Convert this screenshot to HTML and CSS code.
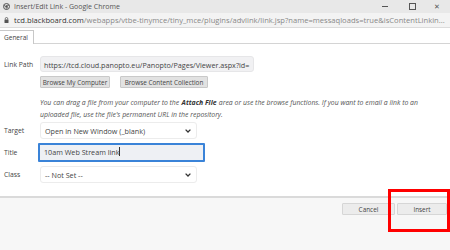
FILE: index.html
```html
<!DOCTYPE html>
<html lang="en">
<head>
    <meta charset="UTF-8">
    <title>Insert/Edit Link - Google Chrome</title>
    <link rel="stylesheet" href="styles.css">
</head>
<body>
    <div class="titlebar">
        <svg class="chrome-icon" width="7" height="7" viewBox="0 0 14 14">
            <circle cx="7" cy="7" r="6" fill="none" stroke="#555" stroke-width="2"/>
            <circle cx="7" cy="7" r="2.4" fill="#555"/>
            <path d="M7 4.6H12.6M4.9 8.2L2.1 3.4M9.1 8.2L6.3 13" stroke="#555" stroke-width="1.4"/>
        </svg>
        <span class="title-text">Insert/Edit Link - Google Chrome</span>
        <div class="win-controls">
            <span class="ctl-min"></span>
            <span class="ctl-max"></span>
            <span class="ctl-close">&#x2715;</span>
        </div>
    </div>

    <div class="addressbar">
        <svg class="lock" width="5" height="6" viewBox="0 0 10 12">
            <path d="M2.5 5V3.5a2.5 2.5 0 0 1 5 0V5" fill="none" stroke="#555" stroke-width="1.6"/>
            <rect x="1" y="5" width="8" height="7" rx="1" fill="#555"/>
        </svg>
        <span class="url"><span class="host">tcd.blackboard.com</span>/webapps/vtbe-tinymce/tiny_mce/plugins/advlink/link.jsp?name=messaqloads=true&amp;isContentLinkin...</span>
    </div>

    <div class="tabs">
        <div class="tab">General</div>
    </div>

    <div class="panel">
        <div class="row row-path">
            <label class="label">Link Path</label>
            <div class="input path-input">https://tcd.cloud.panopto.eu/Panopto/Pages/Viewer.aspx?id=</div>
        </div>
        <div class="row row-buttons">
            <button class="btn btn-browse">Browse My Computer</button>
            <button class="btn btn-collection">Browse Content Collection</button>
        </div>
        <p class="help">You can drag a file from your computer to the <b>Attach File</b> area or use the browse functions. If you want to email a link to an uploaded file, use the file's permanent URL in the repository.</p>
        <div class="row row-target">
            <label class="label">Target</label>
            <div class="select">
                <span>Open in New Window (_blank)</span>
                <svg class="chev" width="6" height="4" viewBox="0 0 6 4"><path d="M0.6 0.6L3 3L5.4 0.6" fill="none" stroke="#333" stroke-width="1.3"/></svg>
            </div>
        </div>
        <div class="row row-title">
            <label class="label">Title</label>
            <div class="input title-input">10am Web Stream link<span class="caret"></span></div>
        </div>
        <div class="row row-class">
            <label class="label">Class</label>
            <div class="select">
                <span>-- Not Set --</span>
                <svg class="chev" width="6" height="4" viewBox="0 0 6 4"><path d="M0.6 0.6L3 3L5.4 0.6" fill="none" stroke="#333" stroke-width="1.3"/></svg>
            </div>
        </div>
    </div>

    <div class="footer">
        <button class="btn btn-cancel">Cancel</button>
        <button class="btn btn-insert">Insert</button>
    </div>

    <div class="highlight"></div>
</body>
</html>
```

FILE: styles.css
```css
body {
    margin: 0;
    width: 450px;
    height: 250px;
    overflow: hidden;
    position: relative;
    font-family: 'Open Sans', 'Noto Sans', sans-serif;
    color: #444;
    background-color: #fff;
}
.titlebar {
    height: 13px;
    display: flex;
    align-items: center;
    padding-left: 3px;
    background-color: #e8e8e8;
    font-size: 7px;
    color: #555;
}
.chrome-icon {
    margin-right: 4px;
}
.win-controls {
    margin-left: auto;
    display: flex;
    align-items: center;
    height: 13px;
}
.ctl-min {
    width: 6px;
    height: 1px;
    background-color: #555;
    margin-right: 21px;
}
.ctl-max {
    width: 5px;
    height: 5px;
    border: 1px solid #555;
    margin-right: 18px;
}
.ctl-close {
    font-size: 7px;
    color: #555;
    margin-right: 10px;
}
.addressbar {
    height: 14px;
    display: flex;
    align-items: center;
    padding-left: 4px;
    background-color: #f3f3f3;
    border-bottom: 1px solid #dcdcdc;
    font-size: 7.6px;
    white-space: nowrap;
    overflow: hidden;
}
.lock {
    margin-right: 5px;
}
.url {
    color: #888;
}
.host {
    color: #333;
}
.tabs {
    height: 16px;
    padding-top: 1px;
    box-sizing: border-box;
    border-bottom: 1px solid #d4d4d4;
    display: flex;
    align-items: flex-end;
}
.tab {
    height: 14px;
    width: 34px;
    box-sizing: border-box;
    border: 1px solid #c8c8c8;
    border-bottom: none;
    border-left: none;
    background-color: #fff;
    font-size: 6.5px;
    color: #444;
    padding-left: 4px;
    line-height: 14px;
    margin-bottom: -1px;
}
.panel {
    padding-top: 12px;
    height: 152px;
    box-sizing: border-box;
}
.row {
    display: flex;
    align-items: center;
}
.label {
    width: 36px;
    padding-left: 4px;
    font-size: 6.8px;
    color: #444;
}
.input {
    box-sizing: border-box;
    font-size: 7.2px;
    color: #444;
    white-space: nowrap;
    overflow: hidden;
}
.path-input {
    width: 214px;
    height: 16px;
    line-height: 16px;
    padding-left: 3px;
    background-color: #f1f1f3;
    border: 1px solid #e6e6e8;
    border-radius: 3px;
}
.row-buttons {
    margin-top: 4px;
    padding-left: 40px;
    gap: 10px;
}
.btn {
    height: 12px;
    padding: 0;
    box-sizing: border-box;
    font-family: 'Open Sans', 'Noto Sans', sans-serif;
    font-size: 6.4px;
    color: #444;
    background-color: #e2e2e2;
    border: 1px solid #c9c9c9;
    border-radius: 1px;
}
.btn-browse {
    width: 70px;
}
.btn-collection {
    width: 88px;
}
.help {
    margin: 9px 0 0 0;
    padding-left: 40px;
    padding-right: 20px;
    font-size: 6.9px;
    line-height: 12px;
    font-style: italic;
    color: #555;
}
.help b {
    color: #333;
    padding: 0 0.5px;
}
.row-target {
    margin-top: 1px;
}
.select {
    width: 157px;
    height: 17px;
    box-sizing: border-box;
    display: flex;
    align-items: center;
    padding: 0 5px 0 4px;
    background-color: #fff;
    border: 1px solid #ececec;
    border-radius: 3px;
    font-size: 7.2px;
    color: #444;
}
.chev {
    margin-left: auto;
}
.row-title {
    margin-top: 4px;
}
.row-title .label {
    width: 34px;
}
.title-input {
    width: 167px;
    height: 19px;
    line-height: 15px;
    padding-left: 4px;
    background-color: #eef0f4;
    border: 2px solid #3a83d8;
    border-radius: 1px;
}
.caret {
    display: inline-block;
    width: 1px;
    height: 9px;
    background-color: #333;
    vertical-align: -1px;
}
.row-class {
    margin-top: 4px;
}
.footer {
    height: 54px;
    box-sizing: border-box;
    border-top: 2px solid #dadada;
    background-color: #f7f7f7;
    display: flex;
    justify-content: flex-end;
    align-items: flex-start;
    padding-top: 5px;
    padding-right: 3px;
    gap: 2px;
}
.btn-cancel {
    width: 53px;
    background-color: #ececec;
    border-color: #d6d6d6;
}
.btn-insert {
    width: 50px;
    background-color: #ececec;
    border-color: #d6d6d6;
}
.highlight {
    position: absolute;
    left: 388px;
    top: 189px;
    width: 62px;
    height: 43px;
    box-sizing: border-box;
    border: 3px solid #f00;
}
```
